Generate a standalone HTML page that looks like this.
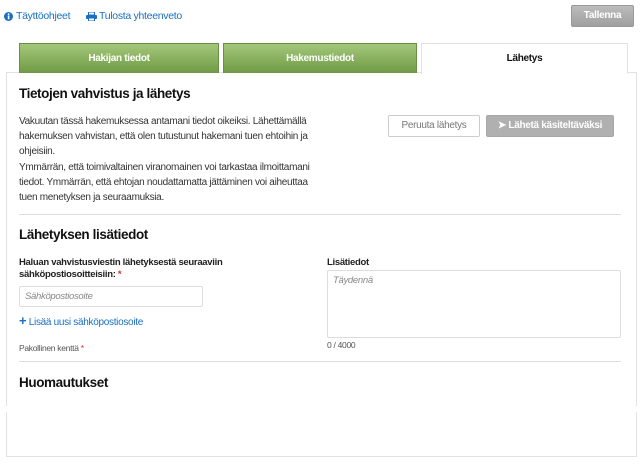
<!DOCTYPE html><html><head><meta charset="utf-8"><style>
*{box-sizing:border-box;margin:0;padding:0}
body{width:642px;height:465px;background:#fff;font-family:"Liberation Sans",sans-serif;color:#222;position:relative;overflow:hidden;font-size:10px;letter-spacing:-0.3px}
.a{position:absolute;white-space:nowrap}
.link{color:#1a6fc0;font-size:10.5px}
.tab{position:absolute;top:43px;height:30px;background:linear-gradient(#a3c77a,#6f9a45);color:#fff;font-weight:bold;font-size:10px;text-align:center;line-height:30px;border:1px solid #6a9044;border-bottom:none}
h{position:absolute;font-weight:bold;font-size:13.5px;letter-spacing:-0.4px;color:#111;white-space:nowrap}
p{position:absolute;font-size:10px;line-height:15px;color:#333;width:300px}
.hr{position:absolute;height:1px;background:#ddd;left:19px;width:602px}
</style></head><body>
<svg class="a" style="left:4px;top:12px" width="9" height="9"><circle cx="4.5" cy="4.5" r="4.5" fill="#1a6fc0"/><rect x="3.8" y="3.5" width="1.6" height="3.8" fill="#fff"/><circle cx="4.6" cy="2.2" r="0.9" fill="#fff"/></svg>
<div class="a link" style="left:16px;top:10px">Täyttöohjeet</div>
<svg class="a" style="left:86px;top:12px" width="11" height="9"><rect x="2.5" y="0" width="6" height="3" fill="none" stroke="#1a6fc0" stroke-width="1"/><rect x="0" y="3" width="11" height="4" rx="1" fill="#1a6fc0"/><rect x="2.5" y="6" width="6" height="3" fill="#fff" stroke="#1a6fc0" stroke-width="1"/></svg>
<div class="a link" style="left:99px;top:10px">Tulosta yhteenveto</div>
<div class="a" style="left:571px;top:5px;width:63px;height:22px;background:linear-gradient(#bcbcbc,#9f9f9f);border:1px solid #999;border-radius:2px;color:#fff;font-weight:bold;font-size:10px;text-align:center;line-height:20px">Tallenna</div>
<div class="a" style="left:6px;top:72px;width:631px;height:334px;border:1px solid #e2e2e2;border-bottom:none"></div>
<div class="a" style="left:6px;top:412px;width:631px;height:45px;border:1px solid #e2e2e2;border-top:none"></div>
<div class="tab" style="left:19px;width:200px">Hakijan tiedot</div>
<div class="tab" style="left:223px;width:194px">Hakemustiedot</div>
<div class="tab" style="left:421px;width:207px;background:#fff;color:#111;border-color:#e2e2e2;height:31px">Lähetys</div>
<h style="left:19px;top:86px">Tietojen vahvistus ja lähetys</h>
<p style="left:19px;top:114px">Vakuutan tässä hakemuksessa antamani tiedot oikeiksi. Lähettämällä hakemuksen vahvistan, että olen tutustunut hakemani tuen ehtoihin ja ohjeisiin.</p>
<p style="left:19px;top:160px">Ymmärrän, että toimivaltainen viranomainen voi tarkastaa ilmoittamani tiedot. Ymmärrän, että ehtojan noudattamatta jättäminen voi aiheuttaa tuen menetyksen ja seuraamuksia.</p>
<div class="a" style="left:388px;top:115px;width:92px;height:22px;border:1px solid #ccc;border-radius:2px;color:#777;font-size:10px;text-align:center;line-height:20px">Peruuta lähetys</div>
<div class="a" style="left:486px;top:115px;width:128px;height:22px;background:#b0b0b0;border:1px solid #a8a8a8;border-radius:2px;color:#fff;font-weight:bold;font-size:10px;text-align:center;line-height:20px">➤ Lähetä käsiteltäväksi</div>
<div class="hr" style="top:214px"></div>
<h style="left:19px;top:227px">Lähetyksen lisätiedot</h>
<div class="a" style="left:19px;top:257px;font-weight:bold;font-size:9.5px;line-height:12px;color:#222">Haluan vahvistusviestin lähetyksestä seuraaviin<br>sähköpostiosoitteisiin: <span style="color:#c33">*</span></div>
<div class="a" style="left:19px;top:286px;width:184px;height:21px;border:1px solid #ddd;border-radius:2px;color:#888;font-style:italic;font-size:9.5px;padding:4px 5px">Sähköpostiosoite</div>
<div class="a link" style="left:19px;top:316px;font-size:10px"><b style="font-size:13px;line-height:10px">+</b> Lisää uusi sähköpostiosoite</div>
<div class="a" style="left:19px;top:343px;font-size:8.5px;color:#555">Pakollinen kenttä <span style="color:#c33">*</span></div>
<div class="a" style="left:327px;top:257px;font-weight:bold;font-size:9.5px">Lisätiedot</div>
<div class="a" style="left:327px;top:270px;width:294px;height:68px;border:1px solid #ddd;border-radius:2px;color:#888;font-style:italic;font-size:9.5px;padding:4px 5px">Täydennä</div>
<div class="a" style="left:327px;top:340px;font-size:8.5px;color:#555">0 / 4000</div>
<div class="hr" style="top:361px"></div>
<h style="left:19px;top:375px">Huomautukset</h>
</body></html>
